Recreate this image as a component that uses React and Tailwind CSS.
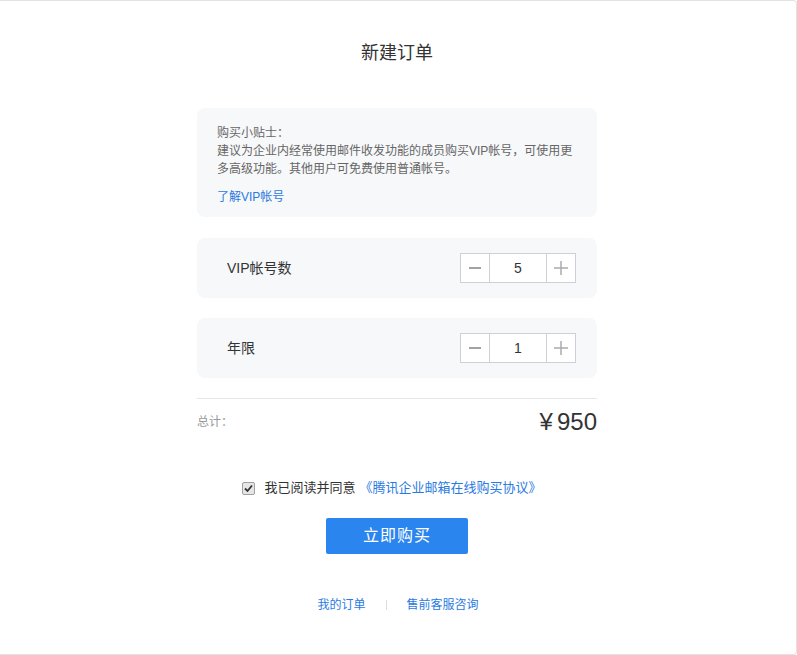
import React, { useState } from 'react';

const font = { fontFamily: '"Liberation Sans", "Noto Sans CJK SC", sans-serif' };

function Stepper({ value, onChange }) {
  return (
    <div className="flex h-[30px] border border-[#ccd1d9] bg-white">
      <button
        onClick={() => onChange(Math.max(1, value - 1))}
        className="flex w-[29px] items-center justify-center border-r border-[#ccd1d9]"
      >
        <svg width="14" height="14" viewBox="0 0 14 14">
          <path d="M1 7 H13" stroke="#666" strokeWidth="1.2" />
        </svg>
      </button>
      <div className="flex w-[57px] items-center justify-center border-r border-[#ccd1d9] text-[14px] text-[#333]">
        {value}
      </div>
      <button
        onClick={() => onChange(value + 1)}
        className="flex w-[28px] items-center justify-center"
      >
        <svg width="14" height="14" viewBox="0 0 14 14">
          <path d="M0 7 H14 M7 0 V14" stroke="#aaa" strokeWidth="1.5" />
        </svg>
      </button>
    </div>
  );
}

function Row({ label, value, onChange }) {
  return (
    <div className="flex h-[60px] items-center justify-between rounded-[8px] bg-[#f7f8fa] pl-[30px] pr-[21px]">
      <span className="text-[14px] text-[#333]">{label}</span>
      <Stepper value={value} onChange={onChange} />
    </div>
  );
}

export default function App() {
  const [count, setCount] = useState(5);
  const [years, setYears] = useState(1);
  const [agree, setAgree] = useState(true);

  return (
    <div style={font} className="h-[655px] rounded-r-[4px] border-y border-r border-[#e3e3e3] bg-white">
      <div className="ml-[197px] w-[400px]">
        <h1 className="pt-[40px] text-center text-[18px] leading-[24px] text-[#333]">新建订单</h1>

        {/* tips */}
        <div className="mt-[43px] rounded-[8px] bg-[#f7f8fa] px-[20px] pb-[11px] pt-[16px] text-[12px] leading-[18px] text-[#666]">
          <p>购买小贴士：</p>
          <p>建议为企业内经常使用邮件收发功能的成员购买VIP帐号，可使用更多高级功能。其他用户可免费使用普通帐号。</p>
          <a href="#" className="mt-[10px] block text-[#2a7ae2]">了解VIP帐号</a>
        </div>

        <div className="mt-[21px] flex flex-col gap-[20px]">
          <Row label="VIP帐号数" value={count} onChange={setCount} />
          <Row label="年限" value={years} onChange={setYears} />
        </div>

        {/* total */}
        <div className="mt-[20px] flex items-center justify-between border-t border-[#e6e6e6] pt-[9px]">
          <span className="text-[12px] text-[#999]">总计：</span>
          <span className="text-[24px] leading-[28px] text-[#333]">
            ¥<span className="ml-[4px]">{count * years * 190}</span>
          </span>
        </div>
      </div>

      {/* agreement */}
      <div className="mt-[43px] flex items-center justify-center pr-[12px] text-[13px] leading-[18px]">
        <button
          onClick={() => setAgree(!agree)}
          className="mr-[9px] flex h-[13px] w-[13px] items-center justify-center rounded-[2px] border border-[#a0a0a0] bg-[#e6e6e6]"
        >
          {agree && (
            <svg width="9" height="9" viewBox="0 0 9 9">
              <path d="M1 4.5 L3.5 7 L8 1.5" stroke="#333" strokeWidth="1.8" fill="none" />
            </svg>
          )}
        </button>
        <span className="text-[#333]">我已阅读并同意</span>
        <a href="#" className="ml-[4px] text-[#2a7ae2]">《腾讯企业邮箱在线购买协议》</a>
      </div>

      <div className="mt-[21px] flex justify-center pr-[2px]">
        <button className="h-[36px] w-[142px] rounded-[2px] bg-[#2b85ef] text-[16px] tracking-[1px] text-white">
          立即购买
        </button>
      </div>

      <div className="mt-[43px] flex items-center justify-center text-[12px] leading-[16px]">
        <a href="#" className="text-[#2a7ae2]">我的订单</a>
        <span className="mx-[20px] h-[10px] w-px bg-[#dddddd]" />
        <a href="#" className="text-[#2a7ae2]">售前客服咨询</a>
      </div>
    </div>
  );
}
